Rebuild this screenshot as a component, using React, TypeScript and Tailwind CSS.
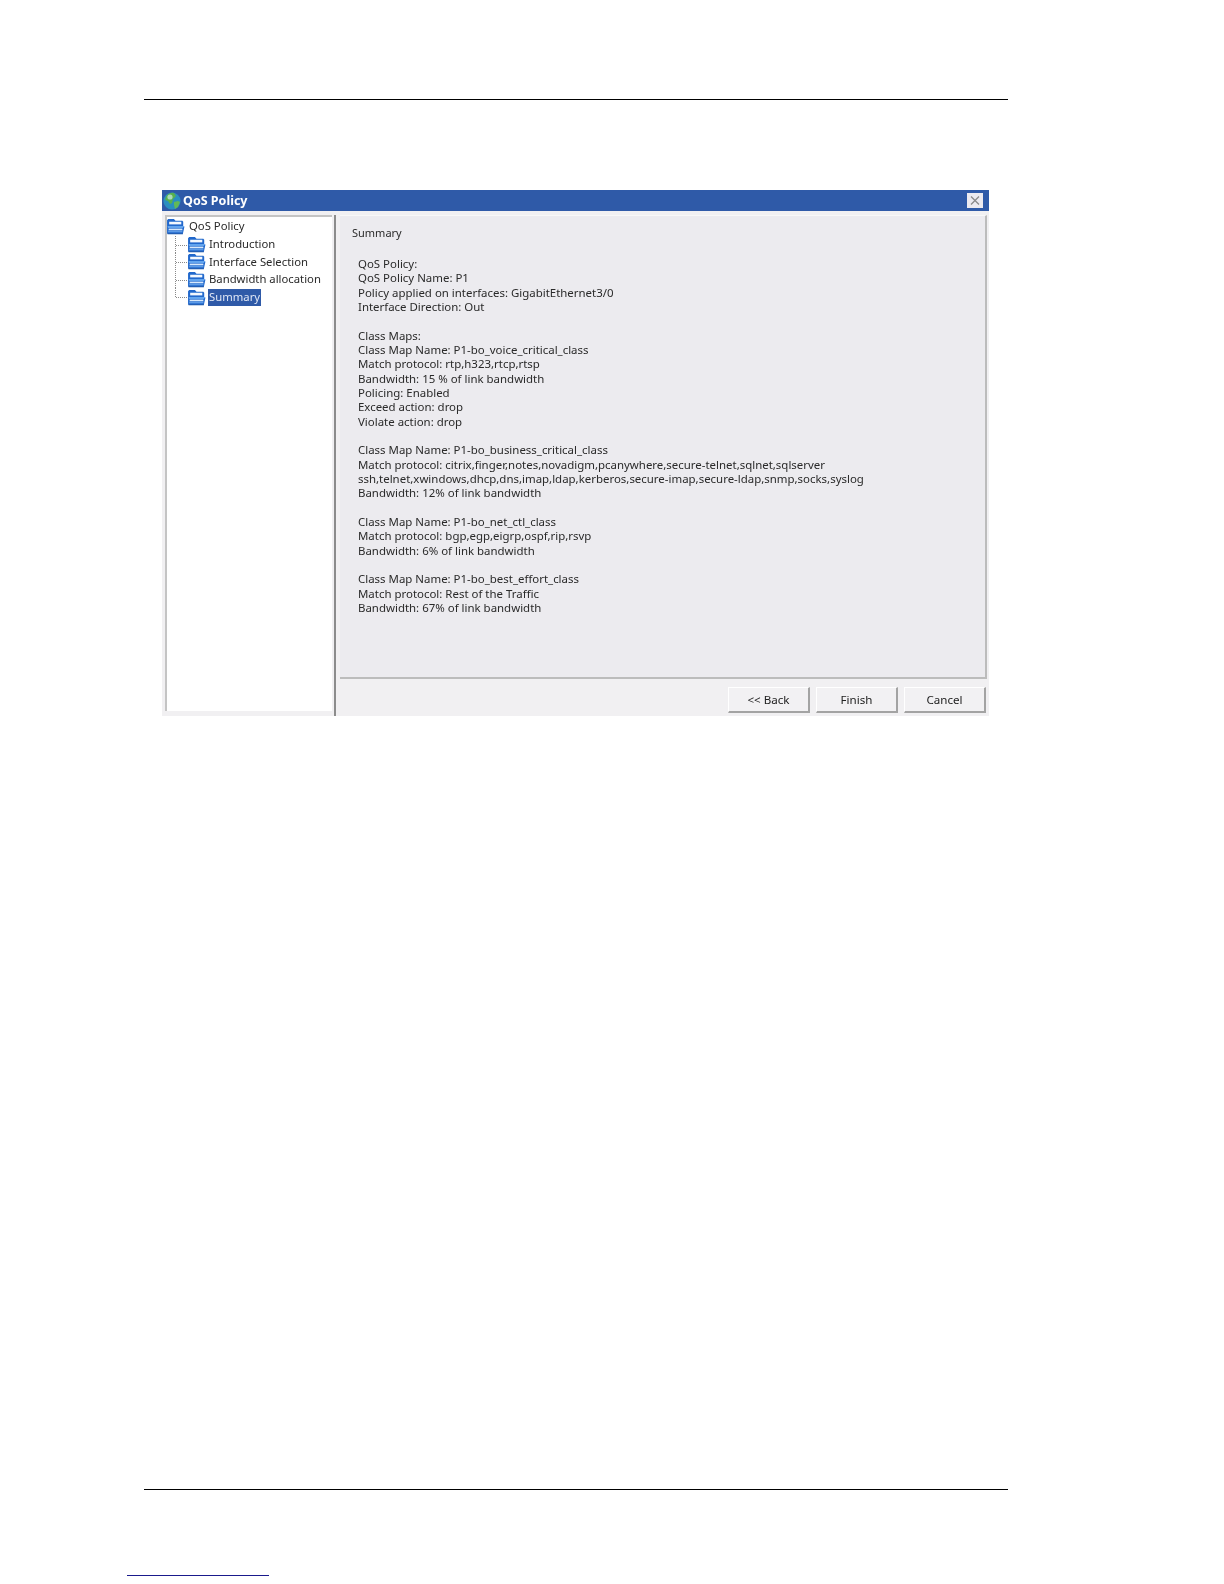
const LINES = [
  'QoS Policy:',
  'QoS Policy Name: P1',
  'Policy applied on interfaces: GigabitEthernet3/0',
  'Interface Direction: Out',
  '',
  'Class Maps:',
  'Class Map Name: P1-bo_voice_critical_class',
  'Match protocol: rtp,h323,rtcp,rtsp',
  'Bandwidth: 15 % of link bandwidth',
  'Policing: Enabled',
  'Exceed action: drop',
  'Violate action: drop',
  '',
  'Class Map Name: P1-bo_business_critical_class',
  'Match protocol: citrix,finger,notes,novadigm,pcanywhere,secure-telnet,sqlnet,sqlserver',
  'ssh,telnet,xwindows,dhcp,dns,imap,ldap,kerberos,secure-imap,secure-ldap,snmp,socks,syslog',
  'Bandwidth: 12% of link bandwidth',
  '',
  'Class Map Name: P1-bo_net_ctl_class',
  'Match protocol: bgp,egp,eigrp,ospf,rip,rsvp',
  'Bandwidth: 6% of link bandwidth',
  '',
  'Class Map Name: P1-bo_best_effort_class',
  'Match protocol: Rest of the Traffic',
  'Bandwidth: 67% of link bandwidth',
];

const TREE = ['Introduction', 'Interface Selection', 'Bandwidth allocation', 'Summary'];

function Folder() {
  return (
    <svg width="19" height="17" viewBox="0 0 18 16" className="shrink-0">
      <path d="M1 14.5V2L2 .8h5.5L9 2.5h6.5l.8 1V8H17.5L16 14.8H2z" fill="#2168cc" />
      <path d="M3 3.5h11.5V6H3z" fill="#f3f8fe" />
      <path d="M1.5 7.5h15.5l-1 2H2z" fill="#62a4ee" />
      <path d="M2.5 10h13v1.6h-13z" fill="#d8e9fb" />
      <path d="M2 12h13.5v1.5H2z" fill="#5d9be6" />
      <path d="M1 14.3h15V15.4H1.5z" fill="#114fa8" />
    </svg>
  );
}

function Globe() {
  return (
    <svg width="18" height="18" viewBox="0 0 18 18" className="shrink-0">
      <circle cx="9" cy="9" r="8.6" fill="#2a8fc0" />
      <path d="M3 5c1-3 5-5 8-4l2 3-3 3-1 4-2 1-2-3-3-1z" fill="#58b04e" />
      <path d="M11 10l4-1 2 1-2 5-3 2-1-4z" fill="#62b857" />
      <circle cx="7" cy="5" r="2.6" fill="#d6f0f5" opacity="0.65" />
    </svg>
  );
}

function Connector({ last }: { last: boolean }) {
  return (
    <svg width="12" height="18" viewBox="0 0 12 18" className="shrink-0 self-start" stroke="#8a8a8a" strokeDasharray="1 1">
      <path d={last ? 'M.5 0V9.5' : 'M.5 0V18'} />
      <path d="M1 9.5H12" />
    </svg>
  );
}

function WizardButton({ label }: { label: string }) {
  return (
    <button className="h-[26px] w-[82px] bg-[#f2f1f3] border-t border-l border-white border-r-2 border-b-2 border-r-[#a3a3a3] border-b-[#a3a3a3] text-[#222] text-[11.6px]">
      {label}
    </button>
  );
}

export default function App() {
  return (
    <div className="w-[1224px] h-[1584px] bg-white overflow-hidden pt-[99px] font-['Noto_Sans',sans-serif] text-[11.45px] text-[#2a2a2a]">
      <div className="ml-[144px] w-[864px] h-[1px] bg-black" />

      <div className="ml-[162px] mt-[90px] w-[827px] h-[526px] bg-[#f1f0f2] flex flex-col blur-[0.35px]">
        {/* Title bar */}
        <div className="h-[21px] bg-[#2f5aa8] flex items-center pl-[1px] pr-[6px]">
          <Globe />
          <span className="ml-[2px] mt-[2px] font-bold text-[12.5px] text-white">QoS Policy</span>
          <span className="ml-auto w-[16px] h-[15px] bg-[#eceaf0] flex items-center justify-center">
            <svg width="10" height="9" viewBox="0 0 10 9">
              <path d="M1 0.5L9 8.5M9 0.5L1 8.5" stroke="#8a8a8a" strokeWidth="1.3" />
            </svg>
          </span>
        </div>

        <div className="flex-1 flex pt-[4px] min-h-0">
          {/* Tree */}
          <div className="ml-[3px] w-[167px] h-[496px] bg-white border-l-2 border-t-2 border-[#c4c4c4] pt-px text-[11.3px]">
            <div className="flex items-center h-[17.6px] gap-[4px] -ml-[1px]">
              <Folder />
              <span>QoS Policy</span>
            </div>
            {TREE.map((item, i) => (
              <div key={item} className="flex items-center h-[17.6px] pl-[8px]">
                <Connector last={i === TREE.length - 1} />
                <Folder />
                <span className={`ml-[2px] px-px ${item === 'Summary' ? 'bg-[#2f5aa8] text-[#dfe6f5]' : ''}`}>{item}</span>
              </div>
            ))}
          </div>

          <div className="ml-[2px] w-[2px] h-[501px] bg-[#8c8c8c]" />

          {/* Summary panel */}
          <div className="ml-[4px] flex-1 pr-[2px] flex flex-col">
            <div className="h-[464px] bg-[#ecebef] border-r-2 border-b-2 border-t border-[#bcbcbc] border-t-[#f8f8f8] pl-[12px] pt-[8px]">
              <p className="leading-[17px] text-[11px]">Summary</p>
              <div className="mt-[16px] ml-[6px] leading-[14.33px] whitespace-pre">
                {LINES.map((line, i) => (
                  <div key={i} className="h-[14.33px]">{line}</div>
                ))}
              </div>
            </div>
            <div className="flex justify-end gap-[6px] pt-[8px] pr-[1px]">
              <WizardButton label="<< Back" />
              <WizardButton label="Finish" />
              <WizardButton label="Cancel" />
            </div>
          </div>
        </div>
      </div>

      <div className="ml-[144px] mt-[773px] w-[864px] h-[1px] bg-black" />
      <div className="ml-[127px] mt-[85px] w-[142px] h-[1px] bg-[#1a1a8c]" />
    </div>
  );
}
